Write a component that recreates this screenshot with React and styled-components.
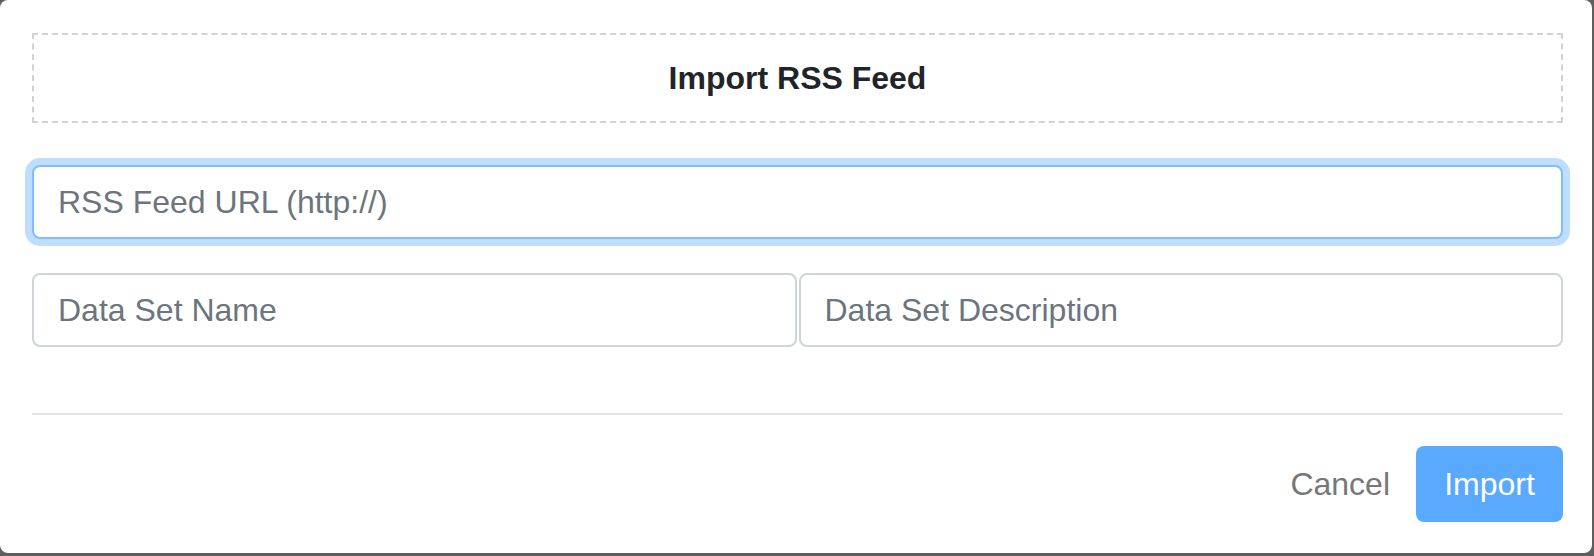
import React from 'react';
import styled, { createGlobalStyle } from 'styled-components';

const GlobalStyle = createGlobalStyle`
  html, body {
    margin: 0;
    padding: 0;
    background: #5e5e5e;
    font-family: "Liberation Sans", Arial, sans-serif;
  }
  * { box-sizing: border-box; }
`;

const App = () => {
  return (
    <>
      <GlobalStyle />
      <Modal>
        <TitleBox>
          <Title>Import RSS Feed</Title>
        </TitleBox>
        <UrlInput type="text" placeholder="RSS Feed URL (http://)" focused />
        <FieldRow>
          <TextInput type="text" placeholder="Data Set Name" />
          <TextInput type="text" placeholder="Data Set Description" />
        </FieldRow>
        <Divider />
        <Footer>
          <CancelButton>Cancel</CancelButton>
          <ImportButton disabled>Import</ImportButton>
        </Footer>
      </Modal>
    </>
  );
};

const Modal = styled.div`
  width: 1592px;
  height: 553px;
  background: #fff;
  border-radius: 8px;
  padding: 33px 29px 31px 32px;
  display: flex;
  flex-direction: column;
`;

const TitleBox = styled.div`
  height: 90px;
  border: 2px dashed #d2d2d2;
  display: flex;
  align-items: center;
  justify-content: center;
`;

const Title = styled.h5`
  margin: 0;
  font-size: 32px;
  font-weight: 700;
  color: #212529;
`;

const TextInput = styled.input`
  display: block;
  width: 100%;
  height: 74px;
  padding: 0 24px;
  font-family: inherit;
  font-size: 32px;
  color: #495057;
  background: #fff;
  border: 2px solid ${p => (p.focused ? '#80bdff' : '#ced4da')};
  border-radius: 8px;
  outline: none;
  box-shadow: ${p => (p.focused ? '0 0 0 7px #bfdeff' : 'none')};
  &::placeholder {
    color: #6c757d;
  }
`;

const UrlInput = styled(TextInput)`
  margin-top: 42px;
`;

const FieldRow = styled.div`
  display: grid;
  grid-template-columns: 1fr 1fr;
  gap: 2px;
  margin-top: 34px;
`;

const Divider = styled.div`
  height: 2px;
  background: #e5e5e5;
  margin-top: 66px;
`;

const Footer = styled.div`
  display: flex;
  justify-content: flex-end;
  align-items: center;
  margin-top: 31px;
`;

const CancelButton = styled.button`
  height: 76px;
  padding: 0 24px;
  border: 2px solid transparent;
  background: transparent;
  font-family: inherit;
  font-size: 32px;
  color: #777;
  cursor: pointer;
`;

const ImportButton = styled.button`
  width: 147px;
  height: 76px;
  padding: 0;
  border: 2px solid transparent;
  border-radius: 8px;
  background: #59a9ff;
  color: #fff;
  font-family: inherit;
  font-size: 32px;
`;

export default App;
